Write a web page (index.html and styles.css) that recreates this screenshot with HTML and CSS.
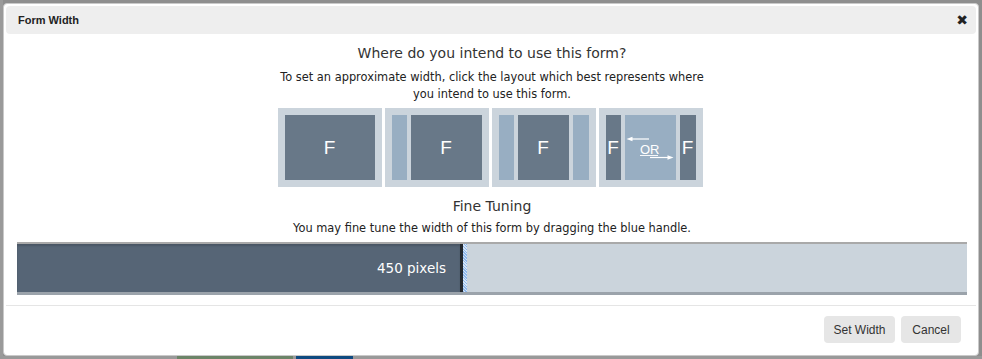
FILE: index.html
```html
<!DOCTYPE html>
<html>
<head>
<meta charset="utf-8">
<link rel="stylesheet" href="styles.css">
</head>
<body>
<div class="backdrop">
  <div class="bg-left"></div>
  <div class="bg-bottom"><span class="bg-green"></span><span class="bg-blue"></span></div>
</div>
<div class="dialog">
  <div class="header">
    <span class="title">Form Width</span>
    <span class="close">&#x2716;</span>
  </div>
  <div class="body">
    <h2 class="heading">Where do you intend to use this form?</h2>
    <p class="sub">To set an approximate width, click the layout which best represents where<br>you intend to use this form.</p>
    <div class="layouts">
      <div class="lay lay1"><div class="d grow">F</div></div>
      <div class="lay lay2"><div class="l w15"></div><div class="d grow">F</div></div>
      <div class="lay lay3"><div class="l w15"></div><div class="d grow">F</div><div class="l w16"></div></div>
      <div class="lay lay4">
        <div class="d w15">F</div>
        <div class="l grow or">
          <svg width="51" height="64" viewBox="0 0 51 64">
            <line x1="5" y1="23" x2="24" y2="23" stroke="#fff" stroke-width="1.2"/>
            <polygon points="1.5,23 7.5,20.8 7.5,25.2" fill="#fff"/>
            <text x="15" y="37.5" fill="#fff" font-family="Liberation Sans, Arial, sans-serif" font-size="13">OR</text>
            <line x1="15" y1="39.5" x2="33" y2="39.5" stroke="#fff" stroke-width="0.9"/>
            <line x1="25" y1="41.5" x2="45" y2="41.5" stroke="#fff" stroke-width="1.2"/>
            <polygon points="48.5,41.5 42.5,39.3 42.5,43.7" fill="#fff"/>
          </svg>
        </div>
        <div class="d w16">F</div>
      </div>
    </div>
    <h2 class="heading h2b">Fine Tuning</h2>
    <p class="sub sub2">You may fine tune the width of this form by dragging the blue handle.</p>
    <div class="slider">
      <div class="fill"><span class="val">450 pixels</span></div>
      <div class="handle"></div>
      <div class="rest"></div>
    </div>
  </div>
  <div class="footer">
    <button class="btn btn-set">Set Width</button>
    <button class="btn btn-cancel">Cancel</button>
  </div>
</div>
</body>
</html>
```

FILE: styles.css
```css
html, body {
  margin: 0;
  padding: 0;
}
body {
  width: 982px;
  height: 359px;
  background: #8e8e8e;
  position: relative;
  overflow: hidden;
  font-family: "DejaVu Sans", Verdana, sans-serif;
}
.backdrop {
  position: absolute;
  inset: 0;
}
.bg-left {
  position: absolute;
  left: 0;
  top: 0;
  width: 3px;
  height: 359px;
  background: #9a9a9a;
}
.bg-bottom {
  position: absolute;
  left: 0;
  top: 356px;
  width: 982px;
  height: 3px;
  background: #999;
}
.bg-green {
  position: absolute;
  left: 177px;
  width: 116px;
  height: 3px;
  background: #6c8468;
}
.bg-blue {
  position: absolute;
  left: 296px;
  width: 57px;
  height: 3px;
  background: #0f4a80;
}
.dialog {
  position: absolute;
  left: 3px;
  top: 3px;
  width: 970px;
  height: 347px;
  background: #fff;
  border: 1px solid #c9c9c9;
  border-radius: 4px;
  display: flex;
  flex-direction: column;
  padding: 2px;
}
.header {
  height: 28px;
  flex: none;
  background: #eeeeee;
  border-radius: 4px;
  display: flex;
  align-items: center;
  justify-content: space-between;
  padding: 0 8px 0 12px;
}
.title {
  font-family: "Liberation Sans", Arial, sans-serif;
  font-weight: bold;
  font-size: 11px;
  color: #222;
}
.close {
  font-family: "DejaVu Sans", sans-serif;
  font-size: 14px;
  line-height: 14px;
  color: #222;
  font-weight: bold;
}
.body {
  display: flex;
  flex-direction: column;
  align-items: center;
  padding: 0 9px 0 11px;
  height: 271px;
  flex: none;
}
.heading {
  margin: 10px 0 0;
  font-size: 14px;
  font-weight: normal;
  color: #333;
  line-height: 18px;
}
.sub {
  margin: 7px 0 0;
  font-size: 11.4px;
  color: #222;
  text-align: center;
  line-height: 17px;
}
.layouts {
  display: flex;
  gap: 3px;
  margin: 5px 4px 0 0;
}
.lay {
  width: 90px;
  height: 65px;
  padding: 7px;
  background: #cbd4dc;
  display: flex;
  gap: 4px;
}
.d {
  background: #687888;
  color: #fff;
  font-family: "Liberation Sans", Arial, sans-serif;
  font-size: 19px;
  display: flex;
  align-items: center;
  justify-content: center;
}
.l {
  background: #98aec2;
}
.grow { flex: 1; }
.w15 { width: 15px; flex: none; }
.w16 { width: 16px; flex: none; }
.or {
  display: flex;
  align-items: center;
  justify-content: center;
}
.or svg { display: block; }
.h2b {
  margin-top: 10px;
}
.sub2 {
  margin-top: 5px;
}
.slider {
  margin-top: 5px;
  height: 48px;
  display: flex;
  border-top: 2px solid #a9a9a9;
  border-bottom: 3px solid #9ba3ab;
  width: 950px;
  flex: none;
}
.fill {
  width: 446px;
  background: #566576;
  box-shadow: inset 0 2px 2px rgba(0,0,0,0.15);
  display: flex;
  align-items: center;
  justify-content: flex-end;
  padding-right: 14px;
  box-sizing: border-box;
  border-right: 3px solid #23282e;
}
.val {
  color: #fff;
  font-size: 13.5px;
}
.handle {
  width: 4px;
  background: repeating-linear-gradient(45deg, #8fb8ec 0 1px, #d6e6f8 1px 2px);
}
.rest {
  flex: 1;
  background: #cbd4dc;
}
.footer {
  border-top: 1px solid #e5e5e5;
  flex: 1;
  display: flex;
  justify-content: flex-end;
  align-items: center;
  gap: 6px;
  padding: 0 15px 0 0;
}
.btn {
  font-family: "Liberation Sans", Arial, sans-serif;
  font-size: 12px;
  color: #333;
  background: #e6e6e6;
  border: none;
  border-radius: 4px;
  height: 27px;
  padding: 0;
  margin-top: 0;
}
.btn-set { width: 71px; }
.btn-cancel { width: 60px; }
```
